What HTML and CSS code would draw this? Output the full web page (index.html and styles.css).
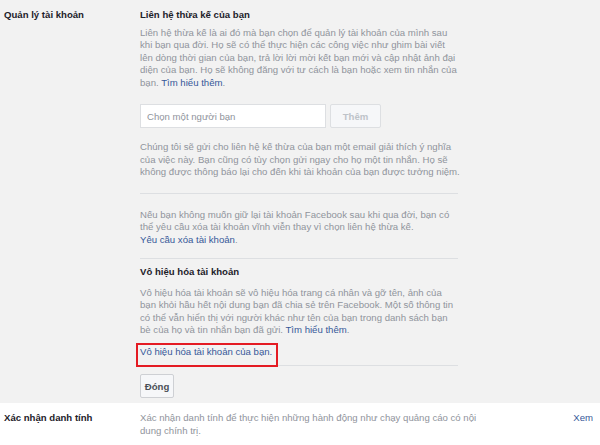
FILE: index.html
```html
<!DOCTYPE html>
<html lang="vi">
<head>
<meta charset="utf-8">
<title>Quản lý tài khoản</title>
<link rel="stylesheet" href="styles.css">
</head>
<body>
<div class="row row-open">
  <div class="label">Quản lý tài khoản</div>
  <div class="content">
    <h3 class="title">Liên hệ thừa kế của bạn</h3>
    <p class="text">Liên hệ thừa kế là ai đó mà bạn chọn để quản lý tài khoản của mình sau<br>khi bạn qua đời. Họ sẽ có thể thực hiện các công việc như ghim bài viết<br>lên dòng thời gian của bạn, trả lời lời mời kết bạn mới và cập nhật ảnh đại<br>diện của bạn. Họ sẽ không đăng với tư cách là bạn hoặc xem tin nhắn của<br>bạn. <a class="link" href="#">Tìm hiểu thêm</a>.</p>
    <div class="picker">
      <input class="input" type="text" placeholder="Chọn một người bạn">
      <button class="btn btn-disabled" type="button">Thêm</button>
    </div>
    <p class="text text-after-picker">Chúng tôi sẽ gửi cho liên hệ kế thừa của bạn một email giải thích ý nghĩa<br>của việc này. Bạn cũng có tùy chọn gửi ngay cho họ một tin nhắn. Họ sẽ<br>không được thông báo lại cho đến khi tài khoản của bạn được tưởng niệm.</p>
    <hr class="divider">
    <p class="text text-delete">Nếu bạn không muốn giữ lại tài khoản Facebook sau khi qua đời, bạn có<br>thể yêu cầu xóa tài khoản vĩnh viễn thay vì chọn liên hệ thừa kế.<br><a class="link" href="#">Yêu cầu xóa tài khoản</a>.</p>
    <hr class="divider divider-2">
    <h3 class="title title-2">Vô hiệu hóa tài khoản</h3>
    <p class="text text-deactivate">Vô hiệu hóa tài khoản sẽ vô hiệu hóa trang cá nhân và gỡ tên, ảnh của<br>bạn khỏi hầu hết nội dung bạn đã chia sẻ trên Facebook. Một số thông tin<br>có thể vẫn hiển thị với người khác như tên của bạn trong danh sách bạn<br>bè của họ và tin nhắn bạn đã gửi. <a class="link" href="#">Tìm hiểu thêm</a>.</p>
    <div class="deactivate-line"><a class="link highlight" href="#">Vô hiệu hóa tài khoản của bạn.</a></div>
    <hr class="divider divider-3">
    <button class="btn btn-close" type="button">Đóng</button>
  </div>
</div>
<div class="row row-closed">
  <div class="label">Xác nhận danh tính</div>
  <div class="content">
    <p class="text">Xác nhận danh tính để thực hiện những hành động như chạy quảng cáo có nội<br>dung chính trị.</p>
  </div>
  <a class="link view" href="#">Xem</a>
</div>
</body>
</html>
```
FILE: styles.css
```css
html, body {
  margin: 0;
  padding: 0;
  background: #ffffff;
}
body {
  font-family: "Liberation Sans", Arial, sans-serif;
  font-size: 9.6px;
  line-height: 12.5px;
  color: #1d2129;
  width: 600px;
  height: 445px;
  overflow: hidden;
}
.row {
  display: grid;
  grid-template-columns: 140px 318px;
}
.row-open {
  background: #f2f2f2;
  padding: 9px 0 5px;
}
.row-closed {
  grid-template-columns: 140px 360px 1fr;
  padding-top: 9px;
}
.label {
  padding-left: 4px;
  font-weight: bold;
  color: #1d2129;
}
.content {
  display: flex;
  flex-direction: column;
  align-items: flex-start;
}
.title {
  margin: 0 0 5px;
  font-size: 9.6px;
  font-weight: bold;
  color: #1d2129;
}
.text {
  margin: 0;
  color: #90949c;
  white-space: nowrap;
}
.link {
  color: #365899;
  text-decoration: none;
}
.picker {
  display: flex;
  gap: 4px;
  margin-top: 15px;
}
.input {
  box-sizing: border-box;
  width: 186px;
  height: 24px;
  border: 1px solid #dddfe2;
  background: #fff;
  padding: 0 6px;
  font-family: inherit;
  font-size: 9.6px;
  color: #1d2129;
  outline: none;
}
.input::placeholder {
  color: #90949c;
}
.btn {
  box-sizing: border-box;
  height: 24px;
  border: 1px solid #dddfe2;
  border-radius: 2px;
  background: #f6f7f9;
  font-family: inherit;
  font-size: 9.6px;
  font-weight: bold;
  padding: 0;
}
.btn-disabled {
  width: 51px;
  color: #bec3c9;
}
.text-after-picker {
  margin-top: 13px;
}
.divider {
  align-self: stretch;
  margin: 14px 0 0;
  border: 0;
  border-top: 1px solid #dddfe2;
  height: 0;
}
.text-delete {
  margin-top: 15px;
}
.divider-2 {
  margin-top: 12px;
}
.title-2 {
  margin-top: 7px;
  margin-bottom: 8px;
}
.deactivate-line {
  margin-top: 9px;
}
.highlight {
  position: relative;
  display: inline-block;
}
.highlight::after {
  content: "";
  position: absolute;
  left: -4px;
  top: -3px;
  right: -6px;
  bottom: -9px;
  border: 2px solid #e41b23;
}
.divider-3 {
  margin-top: 7px;
}
.btn-close {
  margin-top: 8px;
  width: 34px;
  border-color: #ced0d4;
  color: #4b4f56;
}
.view {
  justify-self: end;
  margin-right: 7px;
}
```
